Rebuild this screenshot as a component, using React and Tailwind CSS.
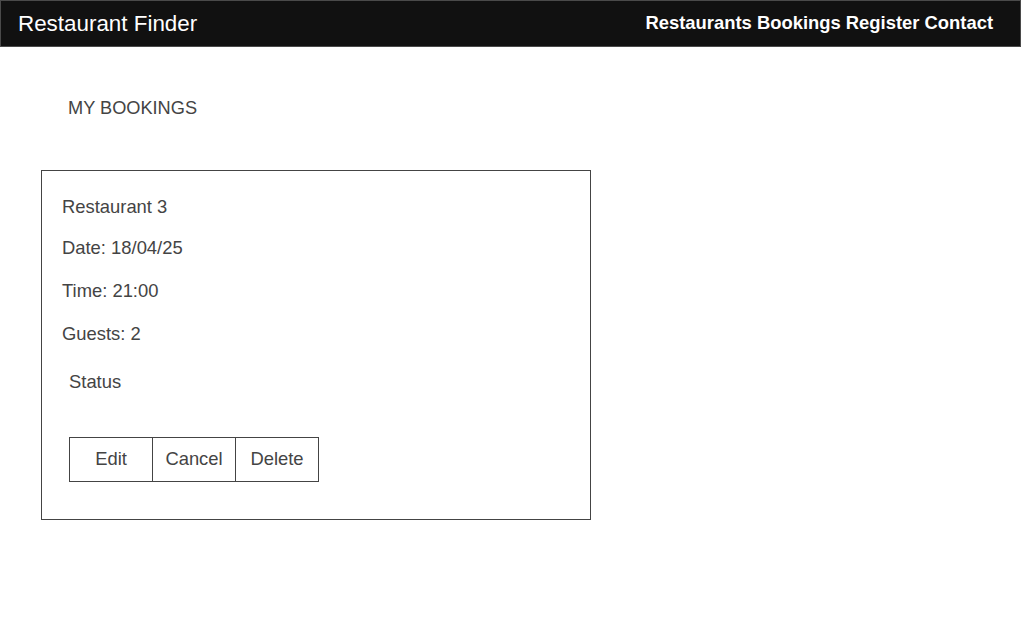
export default function App() {
  const font = { fontFamily: '"Liberation Sans", Arial, sans-serif' };
  return (
    <div className="min-h-screen bg-white text-[#444]" style={font}>
      <header className="flex h-[47px] items-center justify-between border border-[#4a4a4a] bg-[#111111] pl-[17px] pr-[27px] pt-[2px]">
        <div className="text-[22.4px] leading-none text-white">Restaurant Finder</div>
        <nav className="mb-[2px] text-[18.4px] font-bold leading-none text-white">
          <span>Restaurants</span> <span>Bookings</span> <span>Register</span> <span>Contact</span>
        </nav>
      </header>
      <div className="pl-[68px] pt-[51px] text-[18.2px] leading-[20px]">MY BOOKINGS</div>
      <div className="ml-[41px] mt-[52px] h-[350px] w-[550px] border border-[#444] pt-[26px] pl-[20px] text-[18.4px] leading-[20px]">
        <div>Restaurant 3</div>
        <div className="mt-[21px]">Date: 18/04/25</div>
        <div className="mt-[23px]">Time: 21:00</div>
        <div className="mt-[23px]">Guests: 2</div>
        <div className="mt-[28px] pl-[7px]">Status</div>
        <div className="mt-[45px] ml-[7px] flex">
          <button className="flex h-[45px] w-[84px] items-center justify-center border border-[#444] bg-white pb-[2px] text-[18.4px] text-[#444]">Edit</button>
          <button className="-ml-px flex h-[45px] w-[84px] items-center justify-center border border-[#444] bg-white pb-[2px] text-[18.4px] text-[#444]">Cancel</button>
          <button className="-ml-px flex h-[45px] w-[84px] items-center justify-center border border-[#444] bg-white pb-[2px] text-[18.4px] text-[#444]">Delete</button>
        </div>
      </div>
    </div>
  );
}
